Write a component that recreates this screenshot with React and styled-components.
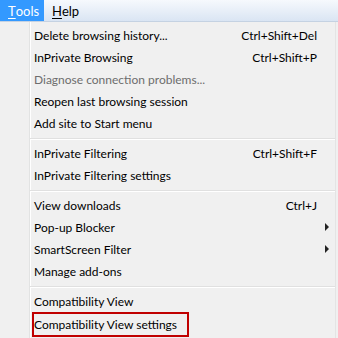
import React from "react";
import styled, { createGlobalStyle } from "styled-components";

const groups = [
  [
    { label: "Delete browsing history...", shortcut: "Ctrl+Shift+Del" },
    { label: "InPrivate Browsing", shortcut: "Ctrl+Shift+P" },
    { label: "Diagnose connection problems...", disabled: true },
    { label: "Reopen last browsing session" },
    { label: "Add site to Start menu" },
  ],
  [
    { label: "InPrivate Filtering", shortcut: "Ctrl+Shift+F" },
    { label: "InPrivate Filtering settings" },
  ],
  [
    { label: "View downloads", shortcut: "Ctrl+J" },
    { label: "Pop-up Blocker", submenu: true },
    { label: "SmartScreen Filter", submenu: true },
    { label: "Manage add-ons" },
  ],
  [
    { label: "Compatibility View" },
    { label: "Compatibility View settings", marked: true },
  ],
];

export default () => {
  return (
    <>
      <GlobalStyle />
      <Window>
        <MenuBar>
          <MenuTitle active>
            <u>T</u>ools
          </MenuTitle>
          <MenuTitle>
            <u>H</u>elp
          </MenuTitle>
        </MenuBar>
        <Dropdown>
          <Gutter />
          <Items>
            {groups.map((group, gi) => (
              <React.Fragment key={gi}>
                {gi > 0 && <Separator />}
                {group.map(item => (
                  <Item key={item.label} disabled={item.disabled}>
                    {item.marked ? (
                      <Marked>{item.label}</Marked>
                    ) : (
                      <Label>{item.label}</Label>
                    )}
                    <Shortcut>{item.shortcut}</Shortcut>
                    <ArrowCell>{item.submenu && <Arrow />}</ArrowCell>
                  </Item>
                ))}
              </React.Fragment>
            ))}
          </Items>
        </Dropdown>
      </Window>
    </>
  );
};

const GlobalStyle = createGlobalStyle`
  html, body {
    margin: 0;
    padding: 0;
    background: #f0f0f0;
  }
  body {
    font-family: Lato, "Noto Sans", sans-serif;
    font-size: 12px;
    color: #000;
  }
`;

const Window = styled.div`
  width: 338px;
  height: 338px;
  overflow: hidden;
  display: flex;
  flex-direction: column;
`;

const MenuBar = styled.div`
  height: 21px;
  flex-shrink: 0;
  display: flex;
  align-items: stretch;
  background: linear-gradient(#f6f9fd, #dae5f3);
  border-bottom: 1px solid #c5d2e2;
`;

const MenuTitle = styled.div`
  display: flex;
  align-items: center;
  width: ${p => (p.active ? "44px" : "auto")};
  box-sizing: border-box;
  padding: 0 8px;
  background: ${p => (p.active ? "#3399ff" : "transparent")};
  color: ${p => (p.active ? "#fff" : "#000")};
  font-size: 13px;
  u {
    text-decoration-thickness: 1px;
    text-underline-offset: 2px;
  }
`;

const Dropdown = styled.div`
  flex: 1;
  display: flex;
  background: #f0f0f0;
  border-right: 1px solid #e4e4e4;
  margin-right: 2px;
`;

const Gutter = styled.div`
  width: 29px;
  flex-shrink: 0;
  border-right: 1px solid #e2e3e3;
  box-shadow: 1px 0 0 #ffffff;
`;

const Items = styled.div`
  flex: 1;
  display: flex;
  flex-direction: column;
  padding-top: 2px;
  padding-left: 1px;
`;

const Item = styled.div`
  height: 22px;
  display: grid;
  grid-template-columns: 1fr auto 18px;
  align-items: center;
  padding-left: 3px;
  box-sizing: border-box;
  color: ${p => (p.disabled ? "#6d6d6d" : "#000")};
  white-space: nowrap;
`;

const Label = styled.span``;

const Marked = styled.span`
  justify-self: start;
  align-self: start;
  display: flex;
  align-items: center;
  height: 21px;
  margin: 0 0 0 -2px;
  padding: 0 10px 0 0;
  border: 2px solid #c00000;
`;

const Shortcut = styled.span`
  text-align: right;
`;

const ArrowCell = styled.span`
  display: flex;
  align-items: center;
  justify-content: center;
`;

const Arrow = styled.span`
  width: 0;
  height: 0;
  border-top: 4px solid transparent;
  border-bottom: 4px solid transparent;
  border-left: 4px solid #222;
  margin-left: 1px;
`;

const Separator = styled.div`
  height: 8px;
  display: flex;
  align-items: center;
  margin-left: -1px;
  &::after {
    content: "";
    flex: 1;
    height: 1px;
    background: #e0e0e0;
    box-shadow: 0 1px 0 #ffffff;
  }
`;
